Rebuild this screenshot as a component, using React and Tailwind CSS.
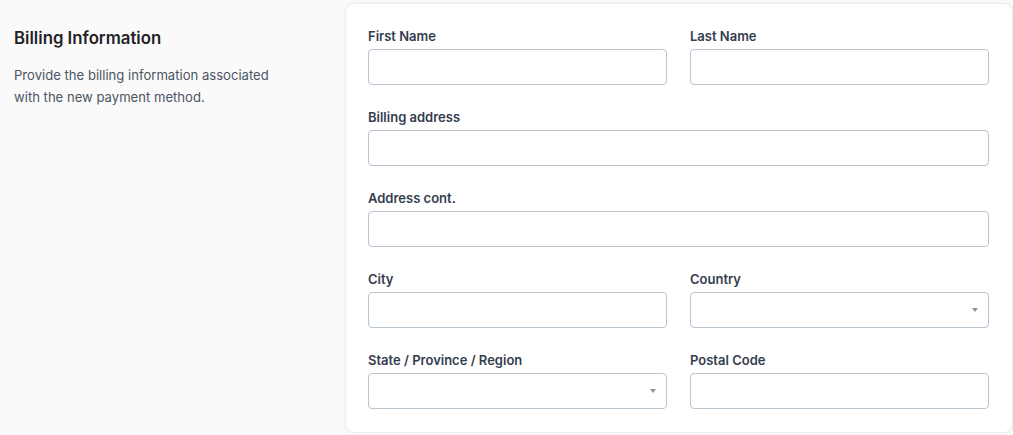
const font = { fontFamily: 'Inter, "Noto Sans", sans-serif' };

function Field({ label, select }) {
  return (
    <div className="flex flex-col">
      <label className="text-[13px] leading-4 font-semibold text-[#343d4e] mb-[5px]">{label}</label>
      <div className="relative h-9 rounded-[4px] border border-[#b9c5d1] bg-white">
        {select && (
          <span className="absolute right-[10px] top-[15px] w-0 h-0 border-l-[3px] border-r-[3px] border-t-[4px] border-l-transparent border-r-transparent border-t-[#8a94a0]" />
        )}
      </div>
    </div>
  );
}

export default function App() {
  return (
    <div className="w-[1013px] h-[435px] bg-[#fafafa] flex" style={font}>
      <div className="w-[346px] shrink-0 pl-[14px] pt-[28px]">
        <h2 className="text-[16.8px] leading-5 font-semibold text-[#1f2328]">Billing Information</h2>
        <p className="mt-[16px] text-[13.1px] leading-[22px] text-[#4b5563] w-[270px]">
          Provide the billing information associated with the new payment method.
        </p>
      </div>
      <div className="mt-[4px] w-[666px] h-[428px] bg-white rounded-lg shadow-[0_0_3px_rgba(0,0,0,0.15)] pl-[22px] pr-[23px] pt-[24px]">
        <div className="grid grid-cols-2 gap-x-[23px] gap-y-[24px]">
          <Field label="First Name" />
          <Field label="Last Name" />
          <div className="col-span-2"><Field label="Billing address" /></div>
          <div className="col-span-2"><Field label="Address cont." /></div>
          <Field label="City" />
          <Field label="Country" select />
          <Field label="State / Province / Region" select />
          <Field label="Postal Code" />
        </div>
      </div>
    </div>
  );
}
